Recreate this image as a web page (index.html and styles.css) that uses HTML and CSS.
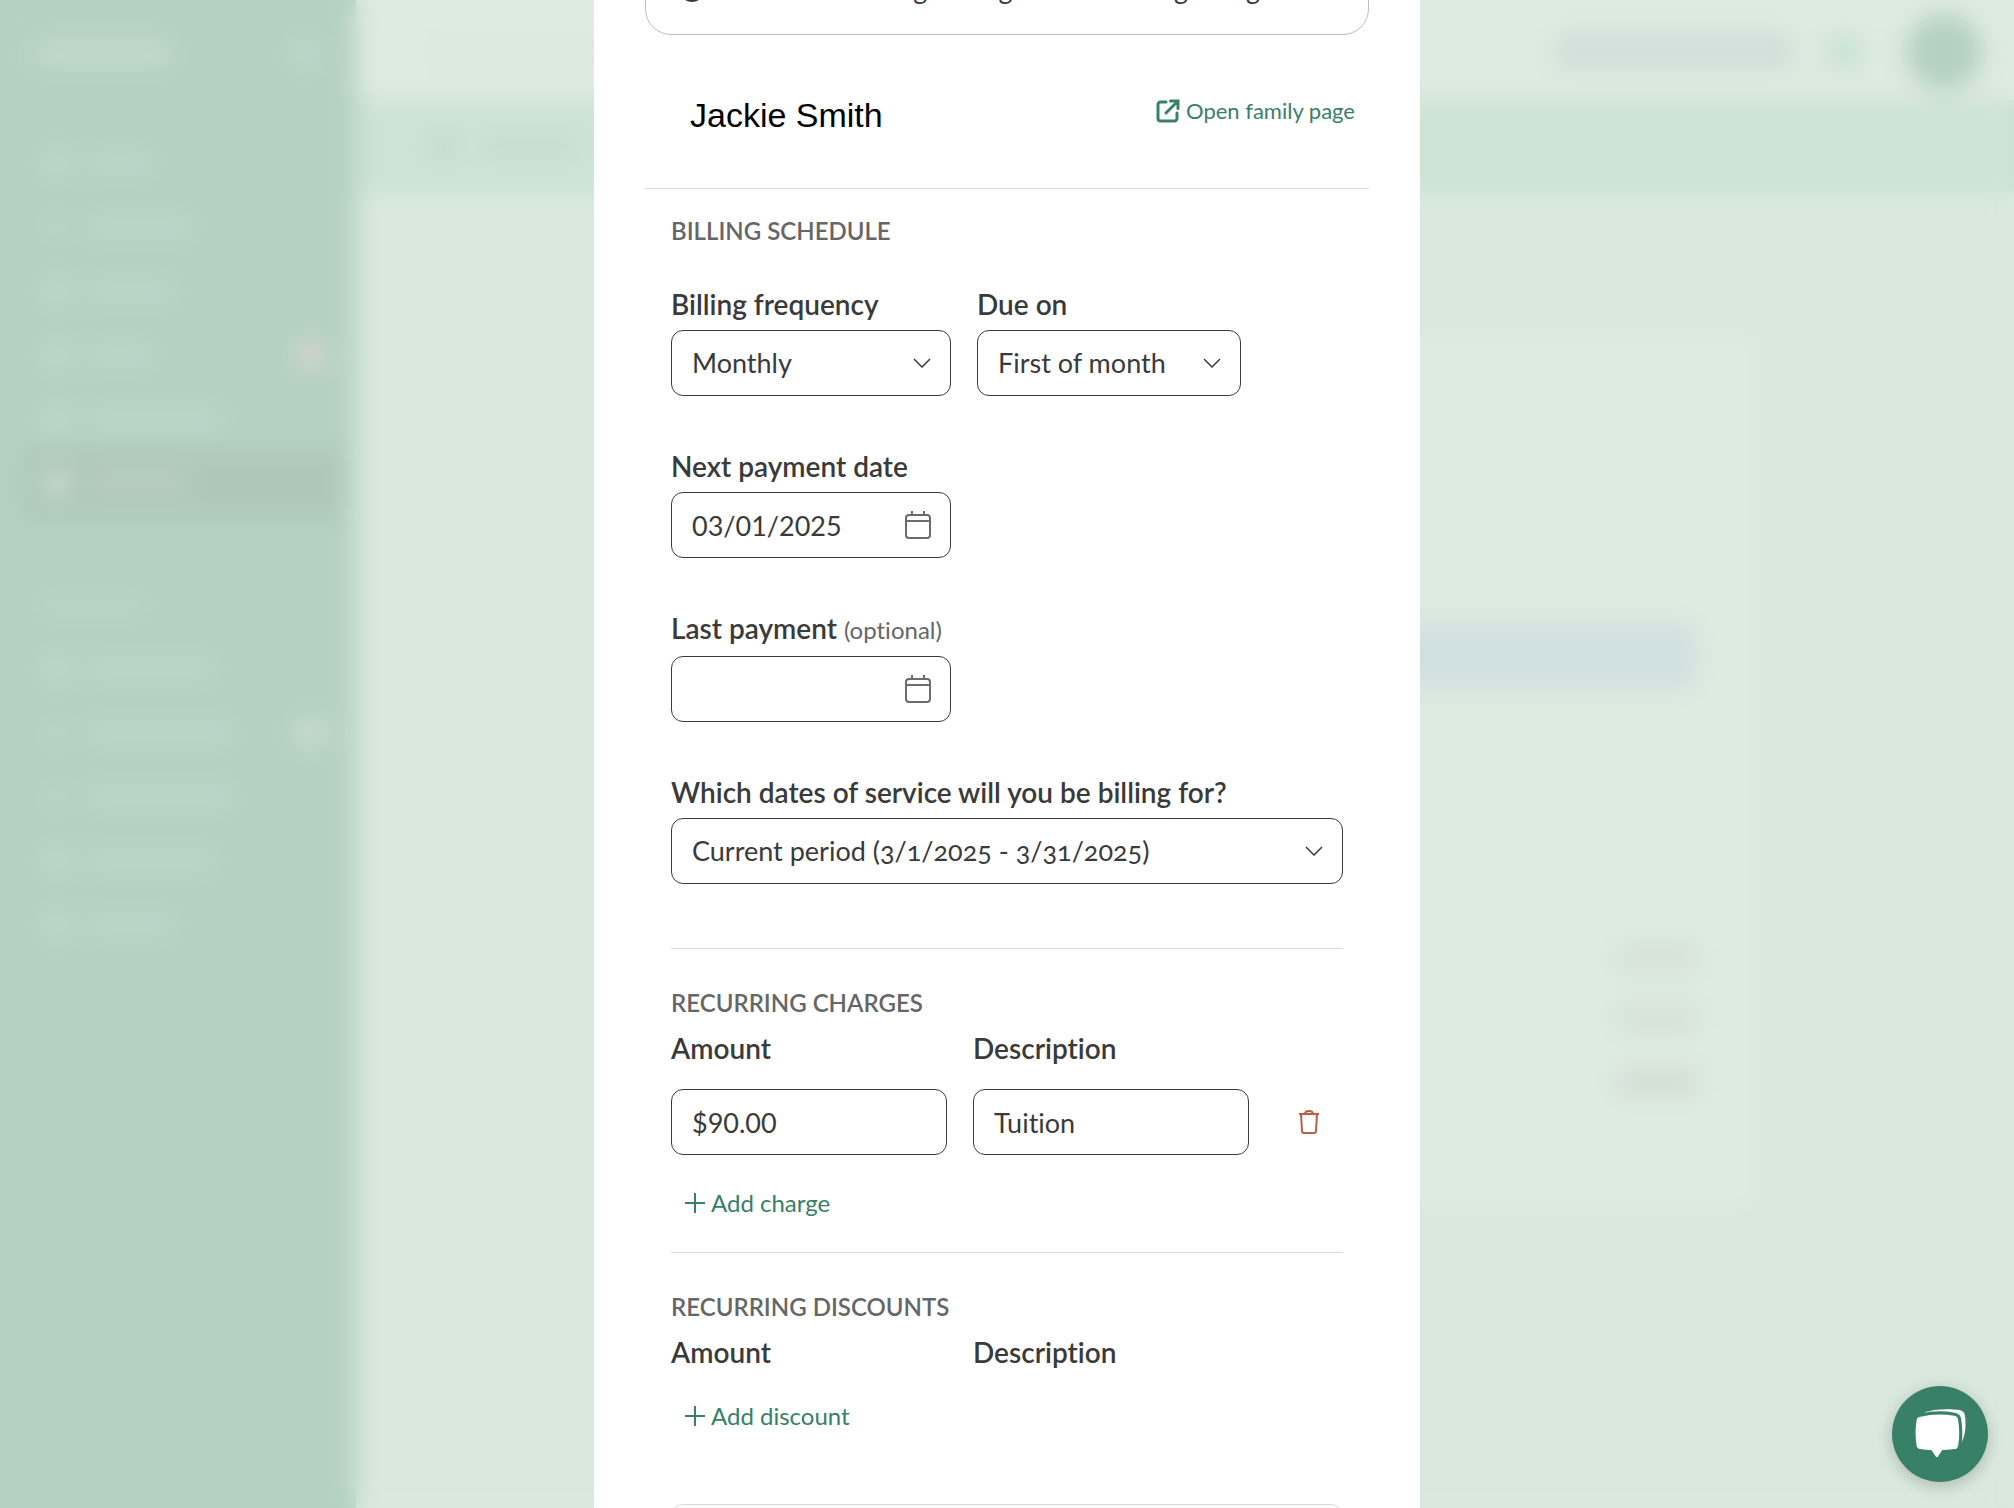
FILE: index.html
```html
<!DOCTYPE html>
<html lang="en">
<head>
<meta charset="utf-8">
<meta name="viewport" content="width=device-width, initial-scale=1">
<title>Recurring billing</title>
<link rel="stylesheet" href="styles.css">
</head>
<body>
<div class="app" aria-hidden="true">
  <div class="sidebar">
    <div class="brand"><span class="brand-name"></span><span class="brand-toggle"></span></div>
    <div class="nav">
      <div class="nav-item"><i class="dot"></i><i class="bar w-60"></i></div>
      <div class="nav-item"><i class="dot faint"></i><i class="bar w-100"></i></div>
      <div class="nav-item"><i class="dot"></i><i class="bar w-80"></i></div>
      <div class="nav-item"><i class="dot"></i><i class="bar w-60"></i><i class="badge alert"></i></div>
      <div class="nav-item"><i class="dot"></i><i class="bar w-130"></i></div>
      <div class="nav-item active"><i class="dot"></i><i class="bar w-100"></i></div>
    </div>
    <div class="nav-heading"><i class="bar faint w-100"></i></div>
    <div class="nav">
      <div class="nav-item"><i class="dot"></i><i class="bar w-120"></i></div>
      <div class="nav-item"><i class="dot faint"></i><i class="bar w-140"></i><i class="badge"></i></div>
      <div class="nav-item"><i class="dot faint"></i><i class="bar w-140"></i></div>
      <div class="nav-item"><i class="dot"></i><i class="bar w-120"></i></div>
      <div class="nav-item"><i class="dot"></i><i class="bar w-80"></i></div>
    </div>
  </div>
  <div class="content">
    <div class="topbar"><i class="search"></i><i class="pill"></i><i class="status"></i><i class="avatar"></i></div>
    <div class="subbar"><i class="crumb-dot"></i><i class="crumb"></i></div>
    <div class="panel">
      <div class="panel-banner"></div>
      <div class="totals"><i></i><i></i><i class="strong"></i></div>
    </div>
  </div>
</div>

<div class="overlay">
  <main class="modal" role="dialog" aria-label="Recurring billing">
    <div class="notice">
      <svg class="notice-icon" viewBox="0 0 24 24" aria-hidden="true"><circle cx="12" cy="12" r="10.5" fill="none" stroke="currentColor" stroke-width="3"/><path d="M12 10v12" stroke="currentColor" stroke-width="4"/></svg>
      <span>Edits affect billing through each existing charge</span>
    </div>

    <header class="family">
      <h1 class="family-name">Jackie Smith</h1>
      <a class="link family-link" href="#family">
        <svg class="icon-open" viewBox="0 0 24 24" aria-hidden="true"><path d="M10 3H4.500A2.500 2.500 0 0 0 2 5.500v14A2.500 2.500 0 0 0 4.500 22h14a2.500 2.500 0 0 0 2.500-2.500V14M14.500 2H22v7.500M21.500 2.500 10 14" fill="none" stroke="currentColor" stroke-width="3" stroke-linecap="round"/></svg>
        Open family page
      </a>
    </header>

    <form class="form">
      <section class="schedule">
        <h2 class="heading">BILLING SCHEDULE</h2>
        <div class="fields">
          <div class="field-row">
            <div class="field frequency">
              <label for="frequency">Billing frequency</label>
              <div class="control">
                <select id="frequency"><option>Monthly</option></select>
                <svg class="chevron" viewBox="0 0 18 10" aria-hidden="true"><path d="M1 1l8 8 8-8"/></svg>
              </div>
            </div>
            <div class="field due">
              <label for="due">Due on</label>
              <div class="control">
                <select id="due"><option>First of month</option></select>
                <svg class="chevron" viewBox="0 0 18 10" aria-hidden="true"><path d="M1 1l8 8 8-8"/></svg>
              </div>
            </div>
          </div>
          <div class="field date">
            <label for="next">Next payment date</label>
            <div class="control">
              <input id="next" type="text" value="03/01/2025">
              <svg class="calendar" viewBox="0 0 26 28" aria-hidden="true"><rect x="1" y="4" width="24" height="23" rx="3"/><path d="M1 10h24M7 0v4M19 0v4"/></svg>
            </div>
          </div>
          <div class="field date optional">
            <label for="last">Last payment <span class="hint">(optional)</span></label>
            <div class="control">
              <input id="last" type="text">
              <svg class="calendar" viewBox="0 0 26 28" aria-hidden="true"><rect x="1" y="4" width="24" height="23" rx="3"/><path d="M1 10h24M7 0v4M19 0v4"/></svg>
            </div>
          </div>
          <div class="field">
            <label for="period">Which dates of service will you be billing for?</label>
            <div class="control">
              <select id="period" class="oldstyle"><option>Current period (3/1/2025 - 3/31/2025)</option></select>
              <svg class="chevron" viewBox="0 0 18 10" aria-hidden="true"><path d="M1 1l8 8 8-8"/></svg>
            </div>
          </div>
        </div>
      </section>

      <section class="lines">
        <h2 class="heading">RECURRING CHARGES</h2>
        <div class="line-grid line-labels">
          <label for="amount">Amount</label>
          <label for="description">Description</label>
        </div>
        <div class="line-grid line-inputs">
          <input id="amount" class="amount" type="text" value="$90.00">
          <input id="description" type="text" value="Tuition">
          <button class="remove" type="button" aria-label="Remove charge">
            <svg viewBox="0 0 20 24" aria-hidden="true"><path d="M0 4h20M6 4c0-4 8-4 8 0M2 4l1 17a2 2 0 0 0 2 2h10a2 2 0 0 0 2-2l1-17"/></svg>
          </button>
        </div>
        <button class="link add" type="button">
          <svg class="plus" viewBox="0 0 20 20" aria-hidden="true"><path d="M10 0v20M0 10h20"/></svg>
          Add charge
        </button>
      </section>

      <section class="lines">
        <h2 class="heading">RECURRING DISCOUNTS</h2>
        <div class="line-grid line-labels">
          <span>Amount</span>
          <span>Description</span>
        </div>
        <button class="link add" type="button">
          <svg class="plus" viewBox="0 0 20 20" aria-hidden="true"><path d="M10 0v20M0 10h20"/></svg>
          Add discount
        </button>
      </section>

      <div class="summary"></div>
    </form>
  </main>
</div>

<button class="chat" type="button" aria-label="Open chat">
  <svg viewBox="0 0 50 48" aria-hidden="true"><path d="M9 4C20-1 36 0 44 1q4 1 5 5c1 9 1 17-3 26" fill="#fff"/><path d="M6 6Q22 2 39 5q5 1 5 6 2 13 0 24-1 5-5 5-7 1-11 1l-4 6q-2 2-4 0l-4-6q-5 0-10-1-5-1-5-5-2-12 0-24 0-4 5-5z" fill="#fff" stroke="#388067" stroke-width="3"/></svg>
</button>
</body>
</html>
```

FILE: styles.css
```css
* { box-sizing: border-box; }

body {
  margin: 0;
  height: 100vh;
  overflow: hidden;
  background: #d9e9de;
  color: #3a3a3a;
  font-family: Lato, "Open Sans", sans-serif;
  font-size: 27px;
  font-variant-ligatures: none;
  line-height: 32px;
}

h1, h2 { margin: 0; }
svg { display: block; flex: none; }

/* App behind the dialog, seen only as blurred shapes */
.app { display: flex; height: 100vh; }
.sidebar { flex: none; width: 356px; background: #b4d1c2; }
.brand { display: flex; justify-content: space-between; align-items: center; height: 108px; margin-bottom: 23px; padding: 0 36px; }
.brand-name { width: 136px; height: 26px; border-radius: 8px; background: #c4dacc; }
.brand-toggle { width: 28px; height: 28px; border-radius: 50%; background: #bfdacc; }
.nav-item { display: flex; align-items: center; gap: 20px; height: 64px; margin: 0 16px 0 24px; padding: 0 12px 0 20px; }
.nav-item.active { background: #aec7b9; }
.dot { flex: none; width: 26px; height: 26px; border-radius: 50%; background: #c0dccd; }
.active .dot { background: #d0e2d2; }
.bar { height: 18px; background: #bdd9cb; }
.active .bar { background: #bbd1c2; }
.dot.faint, .bar.faint { background: #bad5c7; }
.w-60 { width: 60px; }
.w-80 { width: 80px; }
.w-100 { width: 100px; }
.w-120 { width: 120px; }
.w-130 { width: 130px; }
.w-140 { width: 140px; }
.badge { width: 34px; height: 34px; margin-left: auto; border-radius: 50%; background: #c8dccf; }
.badge.alert { background: #d3d6ca; }
.nav-heading { display: flex; align-items: center; height: 62px; margin-top: 60px; padding-left: 42px; }

.content { flex: 1; min-width: 0; }
.topbar { display: flex; align-items: center; height: 100px; padding: 4px 32px 0 74px; background: #deebe0; }
.search { width: 180px; height: 24px; background: #dae8dd; }
.pill { width: 236px; height: 36px; margin-left: auto; border-radius: 10px; background: #cfdedb; }
.status { width: 36px; height: 36px; margin: 0 44px 0 34px; border-radius: 50%; background: #c6e2cf; }
.avatar { width: 76px; height: 76px; border-radius: 50%; background: #b4d1c2; }
.subbar { display: flex; align-items: center; gap: 26px; height: 92px; padding-left: 74px; background: #cde3d3; }
.crumb-dot { width: 28px; height: 28px; border-radius: 50%; background: #c6dacc; }
.crumb { width: 94px; height: 20px; background: #c9dccf; }
.panel { margin: 143px 256px 0 260px; height: 872px; padding: 288px 61px 0 0; border-radius: 20px; background: #deebe1; }
.panel-banner { height: 66px; border-radius: 22px; background: #d0dfe0; }
.totals { display: flex; flex-direction: column; align-items: flex-end; gap: 38px; padding-top: 258px; }
.totals i { width: 78px; height: 22px; background: #d3dfd5; }
.totals .strong { margin-top: 4px; background: #d0dbd2; }

/* Dialog */
.overlay {
  position: fixed;
  inset: 0;
  display: flex;
  justify-content: center;
  align-items: flex-start;
  overflow: hidden;
  backdrop-filter: blur(12px);
}
.modal { width: 826px; max-width: 100%; padding: 0 51px; background: #fff; }

.notice {
  display: flex;
  align-items: center;
  gap: 12px;
  margin-top: -64px;
  padding: 36px 33px 29px;
  border: 1px solid #bdbdbd;
  border-radius: 26px;
}
.notice-icon { width: 26px; height: 26px; }

.family {
  display: flex;
  justify-content: space-between;
  align-items: flex-start;
  padding: 60px 14px 53px 45px;
  border-bottom: 1px solid #d5d9d8;
}
.family-name { color: #000; font: 400 34px/40px "Liberation Sans", Arial, sans-serif; }
.link {
  display: flex;
  align-items: center;
  gap: 6px;
  padding: 0;
  border: 0;
  background: none;
  color: #388067;
  font: inherit;
  font-size: 24px;
  text-decoration: none;
  cursor: pointer;
}
.family-link { font-size: 22px; }
.icon-open { width: 24px; height: 24px; }

.form { padding: 0 26px; }
.heading { color: #666; font-size: 24px; font-weight: 600; line-height: 32px; }
.schedule { padding: 26px 0 64px; }
.fields { display: flex; flex-direction: column; gap: 54px; margin-top: 41px; }
.field-row { display: flex; gap: 26px; }
.field { display: flex; flex-direction: column; gap: 10px; }
label, .line-labels { font-size: 28px; font-weight: 600; }
.optional label { line-height: 33px; }
.frequency, .date { width: 280px; }
.due { width: 264px; }
.hint { color: #666; font-size: 24px; font-weight: 400; }

.control { position: relative; }
input, select {
  display: block;
  width: 100%;
  height: 66px;
  margin: 0;
  padding: 0 20px;
  border: 1px solid #3a3a3a;
  border-radius: 12px;
  background: #fff;
  color: #3a3a3a;
  font: inherit;
  font-variant-ligatures: none;
  appearance: none;
}
.oldstyle { font-variant-numeric: oldstyle-nums; }
.chevron, .calendar { position: absolute; top: 0; bottom: 0; right: 20px; margin: auto 0; fill: none; pointer-events: none; }
.chevron { width: 18px; height: 10px; stroke: #3a3a3a; stroke-width: 1.5; }
.calendar { width: 26px; height: 28px; stroke: #6b6b6b; stroke-width: 2; }

.lines { padding: 38px 0 33px; border-top: 1px solid #d5d9d8; }
.line-grid { display: grid; grid-template-columns: 276px 276px 1fr; gap: 26px; align-items: center; }
.line-labels { margin-top: 13px; }
.line-inputs { margin-top: 25px; }
.remove { justify-self: center; padding: 8px; border: 0; background: none; color: #bc5f40; cursor: pointer; }
.remove svg { width: 20px; height: 24px; fill: none; stroke: currentColor; stroke-width: 2; }
.add { margin: 32px 0 0 14px; }
.plus { width: 20px; height: 20px; fill: none; stroke: currentColor; stroke-width: 2; }
.summary { height: 120px; margin-top: 39px; border: 1px solid #d5d9d8; border-radius: 12px; }

.chat {
  position: fixed;
  right: 26px;
  bottom: 26px;
  display: grid;
  place-items: center;
  width: 96px;
  height: 96px;
  padding: 0;
  border: 0;
  border-radius: 50%;
  background: #388067;
  box-shadow: 0 4px 16px rgba(0, 0, 0, .2);
  cursor: pointer;
}
.chat svg { width: 52px; height: 50px; }
```
